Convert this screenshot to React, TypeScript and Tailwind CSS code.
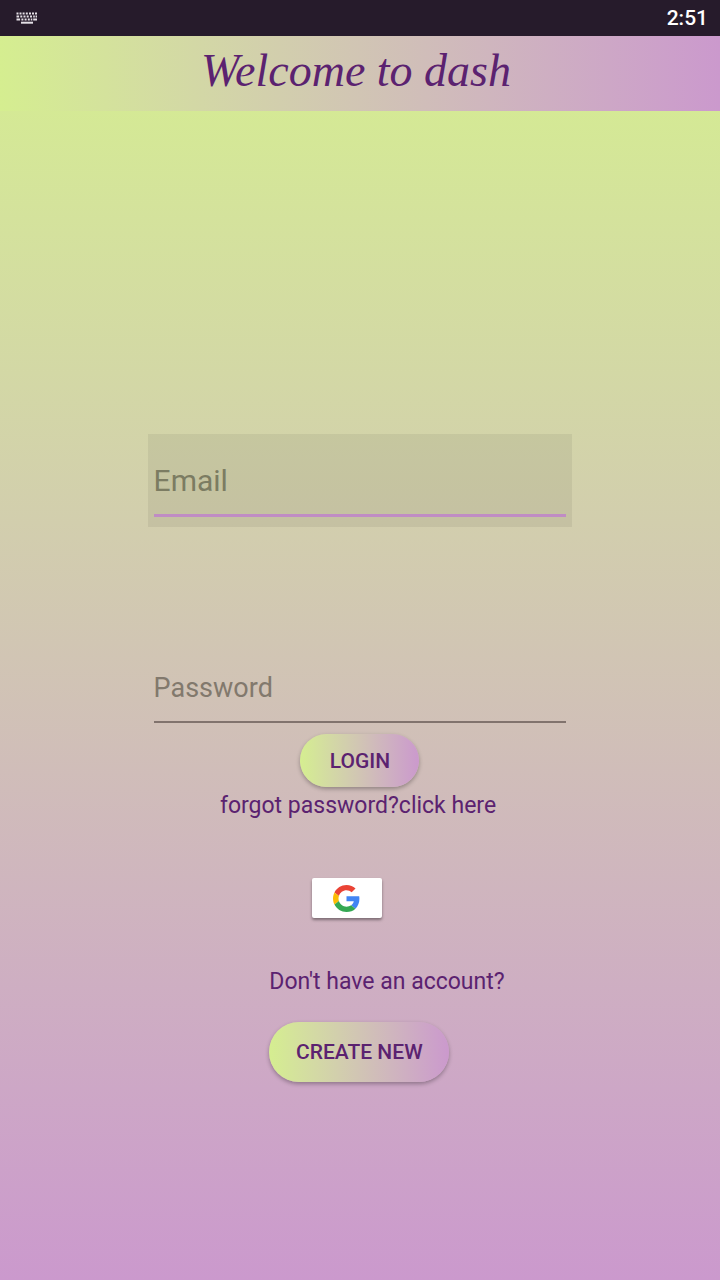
import React from "react";

const pill =
  "rounded-full bg-linear-to-r from-[#d5ee90] to-[#cb99cd] text-[21px] leading-6 font-medium text-[#5b2270] shadow-[0_2px_4px_rgba(0,0,0,0.3)]";

function KeyboardIcon() {
  return (
    <svg width="22" height="12" viewBox="0 0 22 12" fill="#e4e0e6" aria-hidden="true">
      <path d="M0.5 0.5h2v2h-2zM3.5 0.5h2v2h-2zM6.6 0.5h2v2h-2zM9.8 0.5h2v2h-2zM13 0.5h2v2h-2zM16 0.5h2v2h-2zM19 0.5h2v2h-2z" />
      <path d="M0.5 3.5h2.6v2h-2.6zM4.3 3.5h2v2h-2zM7.5 3.5h2v2h-2zM10.7 3.5h2v2h-2zM14 3.5h2v2h-2zM17.2 3.5h1.6v2h-1.6zM19.6 3.5h1.4v2h-1.4z" />
      <path d="M0.5 6.5h3.6v2h-3.6zM5.4 6.5h2v2h-2zM8.6 6.5h2v2h-2zM11.8 6.5h2v2h-2zM14.8 6.5h1.5v2h-1.5zM17.2 6.5h3.8v2h-3.8z" />
      <path d="M5 9.7h12v2h-12z" />
    </svg>
  );
}

function GoogleLogo() {
  return (
    <svg width="27" height="27" viewBox="0 0 48 48" aria-hidden="true">
      <path fill="#EA4335" d="M24 9.5c3.54 0 6.71 1.22 9.21 3.6l6.85-6.85C35.9 2.38 30.47 0 24 0 14.62 0 6.51 5.38 2.56 13.22l7.98 6.19C12.43 13.72 17.74 9.5 24 9.5z" />
      <path fill="#4285F4" d="M46.98 24.55c0-1.57-.15-3.09-.38-4.55H24v9.02h12.94c-.58 2.96-2.26 5.48-4.78 7.18l7.73 6c4.51-4.18 7.09-10.36 7.09-17.65z" />
      <path fill="#FBBC05" d="M10.53 28.59c-.48-1.45-.76-2.99-.76-4.59s.27-3.14.76-4.59l-7.98-6.19C.92 16.46 0 20.12 0 24c0 3.88.92 7.54 2.56 10.78l7.97-6.19z" />
      <path fill="#34A853" d="M24 48c6.48 0 11.93-2.13 15.89-5.81l-7.73-6c-2.15 1.45-4.92 2.3-8.16 2.3-6.26 0-11.57-4.22-13.47-9.91l-7.98 6.19C6.51 42.62 14.62 48 24 48z" />
    </svg>
  );
}

export default function App() {
  return (
    <div className="flex min-h-screen flex-col font-[Roboto,sans-serif] text-[#5b2270]">
      <div className="flex h-9 items-center justify-between bg-[#261b2b] pl-4 pr-3">
        <KeyboardIcon />
        <time className="text-[21px] leading-6 font-medium text-white">2:51</time>
      </div>

      <main className="flex grow flex-col items-center bg-linear-to-b from-[#d5ee90] to-[#cb99cd]">
        <header className="flex h-[75px] w-full justify-center bg-linear-to-r from-[#d5ee90] to-[#cb99cd] pr-2">
          <h1 className="font-['Liberation_Serif',cursive] text-[46px] leading-[70px] italic">
            Welcome to dash
          </h1>
        </header>

        <form className="mt-[323px] flex w-[59%] flex-col items-center" onSubmit={(e) => e.preventDefault()}>
          <div className="h-[93px] w-full bg-black/6 px-[6px] pt-3">
            <input
              type="email"
              aria-label="Email"
              placeholder="Email"
              className="h-[71px] w-full border-b-3 border-[#c08cc4] bg-transparent text-[30px] outline-none placeholder:text-[#7c7c62]"
            />
          </div>
          <div className="mt-[114px] w-full px-[6px]">
            <input
              type="password"
              aria-label="Password"
              placeholder="Password"
              className="block h-[82px] w-full border-b-2 border-[#81736d] bg-transparent pt-[14px] text-[27px] outline-none placeholder:text-[#82796d]"
            />
          </div>
          <button type="submit" className={`${pill} mt-[11px] h-[53px] w-[119px]`}>
            LOGIN
          </button>
        </form>

        <a href="#forgot" className="mt-[3px] pr-1 text-[23px] leading-8">
          forgot password?click here
        </a>

        <button
          type="button"
          aria-label="Sign in with Google"
          className="mt-14 mr-[27px] flex h-10 w-[70px] items-center justify-center rounded-xs bg-white shadow-[0_2px_3px_rgba(0,0,0,0.4)]"
        >
          <GoogleLogo />
        </button>

        <section className="mt-12 flex flex-col items-start pl-[54px]">
          <p className="text-[23px] leading-8">Don't have an account?</p>
          <button type="button" className={`${pill} mt-6 h-[60px] w-[180px]`}>
            CREATE NEW
          </button>
        </section>
      </main>
    </div>
  );
}
